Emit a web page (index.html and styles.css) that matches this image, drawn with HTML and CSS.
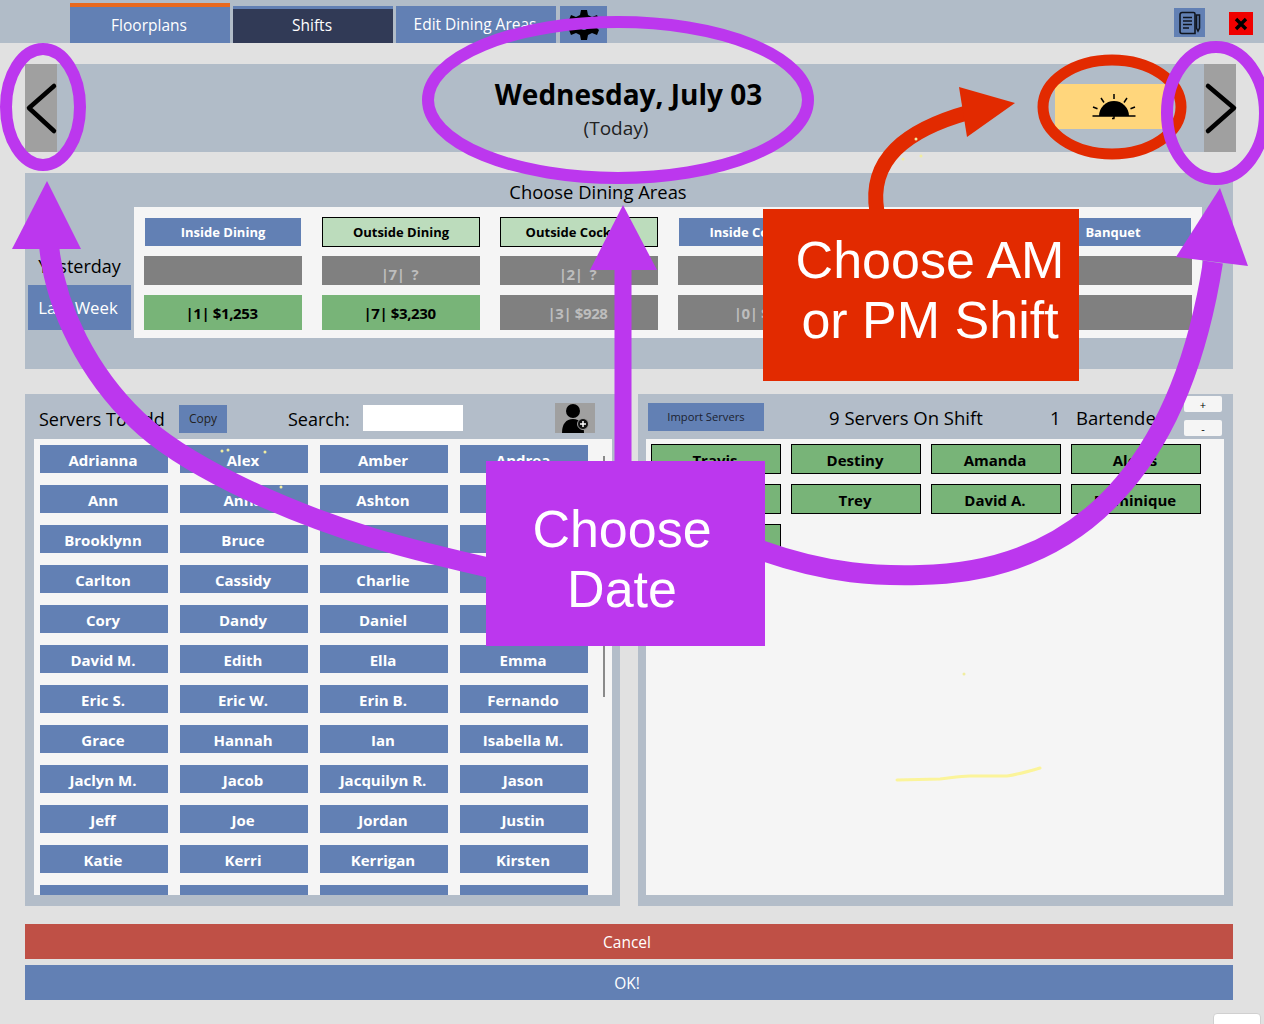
FILE: index.html
```html
<!DOCTYPE html>
<html lang="en">
<head>
    <meta charset="UTF-8">
    <meta name="viewport" content="width=device-width, initial-scale=1.0">
    <title>Shifts</title>
    <link rel="stylesheet" href="styles.css">
</head>
<body>
    <div id="page">
        <div class="topbar">
            <div class="tab tab-active">Floorplans</div>
            <div class="tab tab-dark">Shifts</div>
            <div class="tab">Edit Dining Areas</div>
            <div class="tab tab-gear">
                <svg width="32" height="32" viewBox="0 0 32 32">
                    <path d="M13 1h6l1 5 4 2 5-2 2 5-3 3v4l3 3-2 5-5-2-4 2-1 5h-6l-1-5-4-2-5 2-2-5 3-3v-4l-3-3 2-5 5 2 4-2z" fill="#000"/>
                    <circle cx="16" cy="16" r="5" fill="#6280b4"/>
                </svg>
            </div>
            <div class="doc-btn">
                <svg width="22" height="24" viewBox="0 0 22 24" fill="none" stroke="#10151f" stroke-width="1.6">
                    <path d="M3 1.5h11.5a1.500 1.500 0 0 1 1.500 1.500v19.500H3a2 2 0 0 1-2-2V3.500a2 2 0 0 1 2-2z"/>
                    <path d="M4 6.500h9M4 10h9M4 13.500h9M4 17h6"/>
                    <path d="M17.500 4h3v13l-1.500 3-1.500-3z"/>
                </svg>
            </div>
            <div class="close-btn">
                <svg width="14" height="14" viewBox="0 0 14 14" stroke="#000" stroke-width="3.400">
                    <path d="M2 2l10 10M12 2L2 12"/>
                </svg>
            </div>
        </div>

        <div class="date-band">
            <div class="nav-btn"></div>
            <div class="date-text">
                <div class="date-title">Wednesday, July 03</div>
                <div class="date-sub">(Today)</div>
            </div>
            <div class="shift-btn">
                <svg width="48" height="30" viewBox="0 0 48 30" stroke="#000" fill="none" stroke-width="1.500">
                    <path d="M9 24a15 15 0 0 1 30 0z" fill="#000" stroke="none"/>
                    <path d="M2.500 24h43M24 24v2.500M22 26.500h2.500"/>
                    <path d="M24 2v5M11 6l3 4.500M37 6l-3 4.500M3 15l4.500 1.800M45 15l-4.500 1.800"/>
                </svg>
            </div>
            <div class="nav-btn"></div>
        </div>

        <div class="dining">
            <div class="dining-title">Choose Dining Areas</div>
            <div class="dining-body">
                <div class="side-col">
                    <div class="side-btn">Yesterday</div>
                    <div class="side-btn side-blue">Last Week</div>
                </div>
                <div class="area-grid">
                    <div class="area-head">Inside Dining</div>
                    <div class="area-head area-on">Outside Dining</div>
                    <div class="area-head area-on">Outside Cocktail</div>
                    <div class="area-head">Inside Cocktail</div>
                    <div class="area-head"></div>
                    <div class="area-head">Banquet</div>

                    <div class="area-cell"></div>
                    <div class="area-cell">|7| &nbsp;?</div>
                    <div class="area-cell">|2| &nbsp;?</div>
                    <div class="area-cell"></div>
                    <div class="area-cell"></div>
                    <div class="area-cell"></div>

                    <div class="area-cell area-money area-green">|1| $1,253</div>
                    <div class="area-cell area-money area-green">|7| $3,230</div>
                    <div class="area-cell area-money">|3| $928</div>
                    <div class="area-cell area-money">|0| $1</div>
                    <div class="area-cell area-money"></div>
                    <div class="area-cell area-money"></div>
                </div>
            </div>
        </div>

        <div class="panels">
            <div class="panel">
                <div class="panel-head">
                    <div class="head-title servers-title">Servers To Add</div>
                    <div class="copy-btn">Copy</div>
                    <div class="head-title search-label">Search:</div>
                    <input class="search-box" type="text">
                    <div class="person-btn">
                        <svg width="40" height="30" viewBox="0 0 40 30">
                            <circle cx="18" cy="8" r="7"/>
                            <path d="M7 30c0-9 4-14 11-14s11 5 11 14z"/>
                            <circle cx="28" cy="21" r="5.500" fill="#111" stroke="#a0a0a0" stroke-width="1"/>
                            <path d="M28 18v6M25 21h6" stroke="#fff" stroke-width="1.500"/>
                        </svg>
                    </div>
                </div>
                <div class="server-list">
                    <div class="name-grid">
                        <div class="name">Adrianna</div><div class="name">Alex</div><div class="name">Amber</div><div class="name">Andrea</div>
                        <div class="name">Ann</div><div class="name">Anna</div><div class="name">Ashton</div><div class="name"></div>
                        <div class="name">Brooklynn</div><div class="name">Bruce</div><div class="name">Callie</div><div class="name"></div>
                        <div class="name">Carlton</div><div class="name">Cassidy</div><div class="name">Charlie</div><div class="name"></div>
                        <div class="name">Cory</div><div class="name">Dandy</div><div class="name">Daniel</div><div class="name"></div>
                        <div class="name">David M.</div><div class="name">Edith</div><div class="name">Ella</div><div class="name">Emma</div>
                        <div class="name">Eric S.</div><div class="name">Eric W.</div><div class="name">Erin B.</div><div class="name">Fernando</div>
                        <div class="name">Grace</div><div class="name">Hannah</div><div class="name">Ian</div><div class="name">Isabella M.</div>
                        <div class="name">Jaclyn M.</div><div class="name">Jacob</div><div class="name">Jacquilyn R.</div><div class="name">Jason</div>
                        <div class="name">Jeff</div><div class="name">Joe</div><div class="name">Jordan</div><div class="name">Justin</div>
                        <div class="name">Katie</div><div class="name">Kerri</div><div class="name">Kerrigan</div><div class="name">Kirsten</div>
                        <div class="name">Lacy</div><div class="name"></div><div class="name">Lindsay</div><div class="name">Logan</div>
                    </div>
                    <div class="scroll-line"></div>
                </div>
            </div>

            <div class="panel">
                <div class="panel-head">
                    <div class="import-btn">Import Servers</div>
                    <div class="head-title shift-count">9 Servers On Shift</div>
                    <div class="head-title bar-count">1</div>
                    <div class="head-title bar-label">Bartender</div>
                    <div class="spin-col">
                        <div class="spin-btn">+</div>
                        <div class="spin-btn">-</div>
                    </div>
                </div>
                <div class="shift-list">
                    <div class="name name-on">Travis</div><div class="name name-on">Destiny</div><div class="name name-on">Amanda</div><div class="name name-on">Alexis</div>
                    <div class="name name-on"></div><div class="name name-on">Trey</div><div class="name name-on">David A.</div><div class="name name-on">Dominique</div>
                    <div class="name name-on"></div>
                </div>
            </div>
        </div>

        <div class="wide-btn btn-cancel">Cancel</div>
        <div class="wide-btn btn-ok">OK!</div>
        <div class="corner-box"></div>

        <!-- hand drawn notes that sit over the screenshot -->
        <svg class="notes" width="1264" height="1024" viewBox="0 0 1264 1024" fill="none">
            <path d="M54 86L29 108L54 131" stroke="#000" stroke-width="4.500" stroke-linecap="round" stroke-linejoin="round"/>
            <path d="M1208 86L1234 108L1208 131" stroke="#000" stroke-width="4.500" stroke-linecap="round" stroke-linejoin="round"/>

            <ellipse cx="1112" cy="107" rx="69" ry="47" stroke="#e22a00" stroke-width="11"/>
            <path d="M877 212C868 160 905 130 970 112" stroke="#e22a00" stroke-width="15"/>
            <path d="M959 87L1015 103L967 137z" fill="#e22a00"/>

            <ellipse cx="43" cy="107" rx="37" ry="58" stroke="#bc37ee" stroke-width="12"/>
            <ellipse cx="618" cy="100" rx="190" ry="78" stroke="#bc37ee" stroke-width="12"/>
            <ellipse cx="1216" cy="113" rx="49" ry="66" stroke="#bc37ee" stroke-width="12"/>

            <path d="M49 245C55 310 90 375 137 420C180 462 275 508 373 538C410 549 455 560 495 569" stroke="#bc37ee" stroke-width="20"/>
            <path d="M47 181L81 249H12z" fill="#bc37ee"/>

            <path d="M623 265V470" stroke="#bc37ee" stroke-width="17"/>
            <path d="M623 205L657 270H590z" fill="#bc37ee"/>

            <path d="M760 550C830 575 880 576 920 575C1100 572 1185 440 1213 262" stroke="#bc37ee" stroke-width="20"/>
            <path d="M1220 188L1248 266L1176 257z" fill="#bc37ee"/>

            <path d="M897 780L940 779C950 778 960 776 970 776L1007 776C1020 774 1030 771 1040 768" stroke="#fbf49a" stroke-width="3" stroke-linecap="round"/>
            <g fill="#f0eda0">
                <circle cx="222" cy="451" r="1.500"/>
                <circle cx="228" cy="450" r="1.500"/>
                <circle cx="265" cy="452" r="1.500"/>
                <circle cx="281" cy="487" r="1.500"/>
                <circle cx="916" cy="139" r="1.500"/>
                <circle cx="903" cy="159" r="1.500"/>
                <circle cx="921" cy="156" r="1.500"/>
                <circle cx="964" cy="674" r="1.500"/>
            </g>
        </svg>
        <div class="note note-red">Choose AM<br>or PM Shift</div>
        <div class="note note-purple">Choose<br>Date</div>
    </div>
</body>
</html>
```

FILE: styles.css
```css
html, body {
    margin: 0;
    padding: 0;
}
#page {
    position: relative;
    width: 1264px;
    height: 1024px;
    overflow: hidden;
    background: #e1e1e1;
    font-family: "Open Sans", "Noto Sans", sans-serif;
    color: #000;
}

/* top bar */
.topbar {
    display: flex;
    align-items: flex-end;
    height: 43px;
    padding-left: 70px;
    background: #b1bcc8;
}
.tab {
    box-sizing: border-box;
    width: 160px;
    height: 37px;
    margin-right: 3px;
    padding-right: 2px;
    background: #6280b4;
    color: #fff;
    font-size: 15.5px;
    line-height: 37px;
    text-align: center;
    white-space: nowrap;
}
.tab-active {
    height: 40px;
    border-top: 4px solid #e8691f;
    line-height: 36px;
}
.tab-dark {
    border-top: 3px solid #6280b4;
    background: #313a56;
    line-height: 32px;
}
.tab-gear {
    display: flex;
    align-items: center;
    justify-content: center;
    width: 47px;
    margin-left: 1px;
    margin-right: 0;
    padding-right: 0;
}
.doc-btn {
    display: flex;
    align-items: center;
    justify-content: center;
    width: 31px;
    height: 29px;
    margin-left: 567px;
    margin-bottom: 6px;
    background: #6280b4;
}
.close-btn {
    display: flex;
    align-items: center;
    justify-content: center;
    width: 24px;
    height: 23px;
    margin-left: 24px;
    margin-bottom: 8px;
    background: #f00000;
}

/* date row */
.date-band {
    display: flex;
    align-items: center;
    width: 1211px;
    height: 88px;
    margin: 21px 0 0 25px;
    background: #b1bcc8;
}
.nav-btn {
    width: 32px;
    height: 88px;
    background: #a0a0a0;
}
.date-text {
    width: 1118px;
    padding-top: 3px;
    text-align: center;
}
.date-title {
    padding-left: 25px;
    font-size: 28px;
    font-weight: 700;
    line-height: 38px;
    margin-top: -2px;
}
.date-sub {
    margin-top: 1px;
    font-size: 19px;
    line-height: 28px;
    color: #222;
}
.shift-btn {
    display: flex;
    align-items: center;
    justify-content: center;
    flex-shrink: 0;
    width: 118px;
    height: 45px;
    margin-left: -120px;
    margin-right: 31px;
    margin-top: -3px;
    background: #ffd67c;
}

/* dining areas */
.dining {
    width: 1208px;
    height: 196px;
    margin: 21px 0 0 25px;
    background: #b1bcc8;
}
.dining-title {
    height: 34px;
    padding-right: 62px;
    font-size: 18.4px;
    line-height: 38px;
    text-align: center;
}
.dining-body {
    display: flex;
    padding-left: 3px;
}
.side-col {
    display: flex;
    flex-direction: column;
    justify-content: flex-end;
    width: 103px;
    height: 123px;
    margin-right: 3px;
}
.side-btn {
    height: 40px;
    font-size: 18px;
    line-height: 42px;
    text-align: center;
}
.side-blue {
    height: 45px;
    padding-right: 3px;
    box-sizing: border-box;
    background: #6280b4;
    color: #fff;
    font-size: 16.800px;
    line-height: 45px;
}
.area-grid {
    display: grid;
    grid-template-columns: repeat(6, 158px);
    grid-template-rows: 30px 29px 36px;
    column-gap: 20px;
    row-gap: 9px;
    width: 1048px;
    height: 111px;
    padding: 10px;
    background: #f5f5f5;
}
.area-head {
    margin: 1px;
    background: #6280b4;
    color: #fff;
    font-size: 13px;
    font-weight: 700;
    line-height: 28px;
    text-align: center;
}
.area-on {
    margin: 0;
    border: 1px solid #000;
    background: #bcdcbc;
    color: #000;
}
.area-cell {
    padding-right: 3px;
    background: #808080;
    color: #bdbdbd;
    font-size: 15px;
    font-weight: 700;
    letter-spacing: -0.4px;
    line-height: 37px;
    text-align: center;
}
.area-money {
    margin-top: 1px;
    line-height: 36px;
}
.area-green {
    background: #78b478;
    color: #000;
}

/* server panels */
.panels {
    display: flex;
    gap: 18px;
    width: 1208px;
    margin: 25px 0 0 25px;
}
.panel {
    flex: 1;
    height: 512px;
    background: #b3bdc9;
}
.panel-head {
    display: flex;
    align-items: flex-start;
    box-sizing: border-box;
    height: 45px;
    padding-top: 9px;
}
.head-title {
    flex-shrink: 0;
    font-size: 18px;
    line-height: 32px;
    white-space: nowrap;
}
.servers-title {
    width: 140px;
    margin-left: 14px;
}
.copy-btn {
    width: 48px;
    height: 28px;
    margin-top: 2px;
    background: #6280b4;
    color: #222;
    font-size: 12px;
    line-height: 28px;
    text-align: center;
}
.search-label {
    width: 75px;
    margin-left: 61px;
}
.search-box {
    box-sizing: border-box;
    width: 100px;
    height: 26px;
    margin: 2px 0 0;
    padding: 0;
    border: none;
    background: #fff;
}
.person-btn {
    width: 40px;
    height: 30px;
    margin-left: 92px;
    background: #a0a0a0;
}
.server-list {
    position: relative;
    height: 456px;
    margin: 0 8px 0 9px;
    overflow: hidden;
    background: #f5f5f5;
}
.name-grid {
    display: grid;
    grid-template-columns: repeat(4, 128px);
    grid-auto-rows: 28px;
    gap: 12px;
    padding: 6px;
}
.name {
    box-sizing: border-box;
    padding-right: 2px;
    background: #6280b4;
    color: #fff;
    font-size: 15px;
    font-weight: 700;
    line-height: 30px;
    text-align: center;
    white-space: nowrap;
}
.scroll-line {
    position: absolute;
    top: 17px;
    left: 569px;
    width: 2px;
    height: 241px;
    background: #8a8a8a;
}
.import-btn {
    width: 116px;
    height: 28px;
    margin-left: 10px;
    background: #6280b4;
    color: #1b2230;
    font-size: 11.200px;
    line-height: 28px;
    text-align: center;
}
.shift-count {
    width: 221px;
    margin-left: 65px;
    font-size: 18.500px;
    line-height: 30px;
}
.bar-count {
    width: 26px;
    font-size: 18.500px;
    line-height: 30px;
}
.bar-label {
    width: 108px;
    font-size: 18.500px;
    line-height: 30px;
}
.spin-col {
    display: flex;
    flex-direction: column;
    gap: 8px;
    margin-top: -7px;
}
.spin-btn {
    width: 38px;
    height: 16px;
    border-radius: 2px;
    background: #f5f5f5;
    font-size: 11px;
    line-height: 18px;
    text-align: center;
}
.shift-list {
    display: grid;
    grid-template-columns: repeat(4, 130px);
    grid-auto-rows: 30px;
    gap: 10px;
    align-content: start;
    box-sizing: border-box;
    height: 456px;
    margin: 0 9px 0 8px;
    padding: 5px;
    background: #f5f5f5;
}
.name-on {
    border: 1px solid #000;
    background: #78b478;
    color: #000;
}

/* bottom buttons */
.wide-btn {
    box-sizing: border-box;
    width: 1208px;
    height: 35px;
    margin-left: 25px;
    padding-right: 4px;
    color: #fff;
    font-size: 15.500px;
    line-height: 37px;
    text-align: center;
}
.btn-cancel {
    margin-top: 18px;
    background: #bf5046;
}
.btn-ok {
    margin-top: 6px;
    background: #6280b4;
}
.corner-box {
    position: absolute;
    left: 1213px;
    top: 1013px;
    width: 46px;
    height: 20px;
    border: 1px solid #d0d0d0;
    border-radius: 4px;
    background: #fff;
}

/* notes on top of everything */
.notes {
    position: absolute;
    left: 0;
    top: 0;
}
.note {
    position: absolute;
    box-sizing: border-box;
    color: #fff;
    font-family: "Liberation Sans", sans-serif;
    text-align: center;
}
.note-red {
    left: 763px;
    top: 209px;
    width: 316px;
    height: 172px;
    padding: 21px 0 0 18px;
    background: #e22a00;
    font-size: 52px;
    line-height: 60px;
}
.note-purple {
    left: 486px;
    top: 461px;
    width: 279px;
    height: 185px;
    padding: 38px 7px 0 0;
    background: #bc37ee;
    font-size: 52px;
    line-height: 60px;
}
```
